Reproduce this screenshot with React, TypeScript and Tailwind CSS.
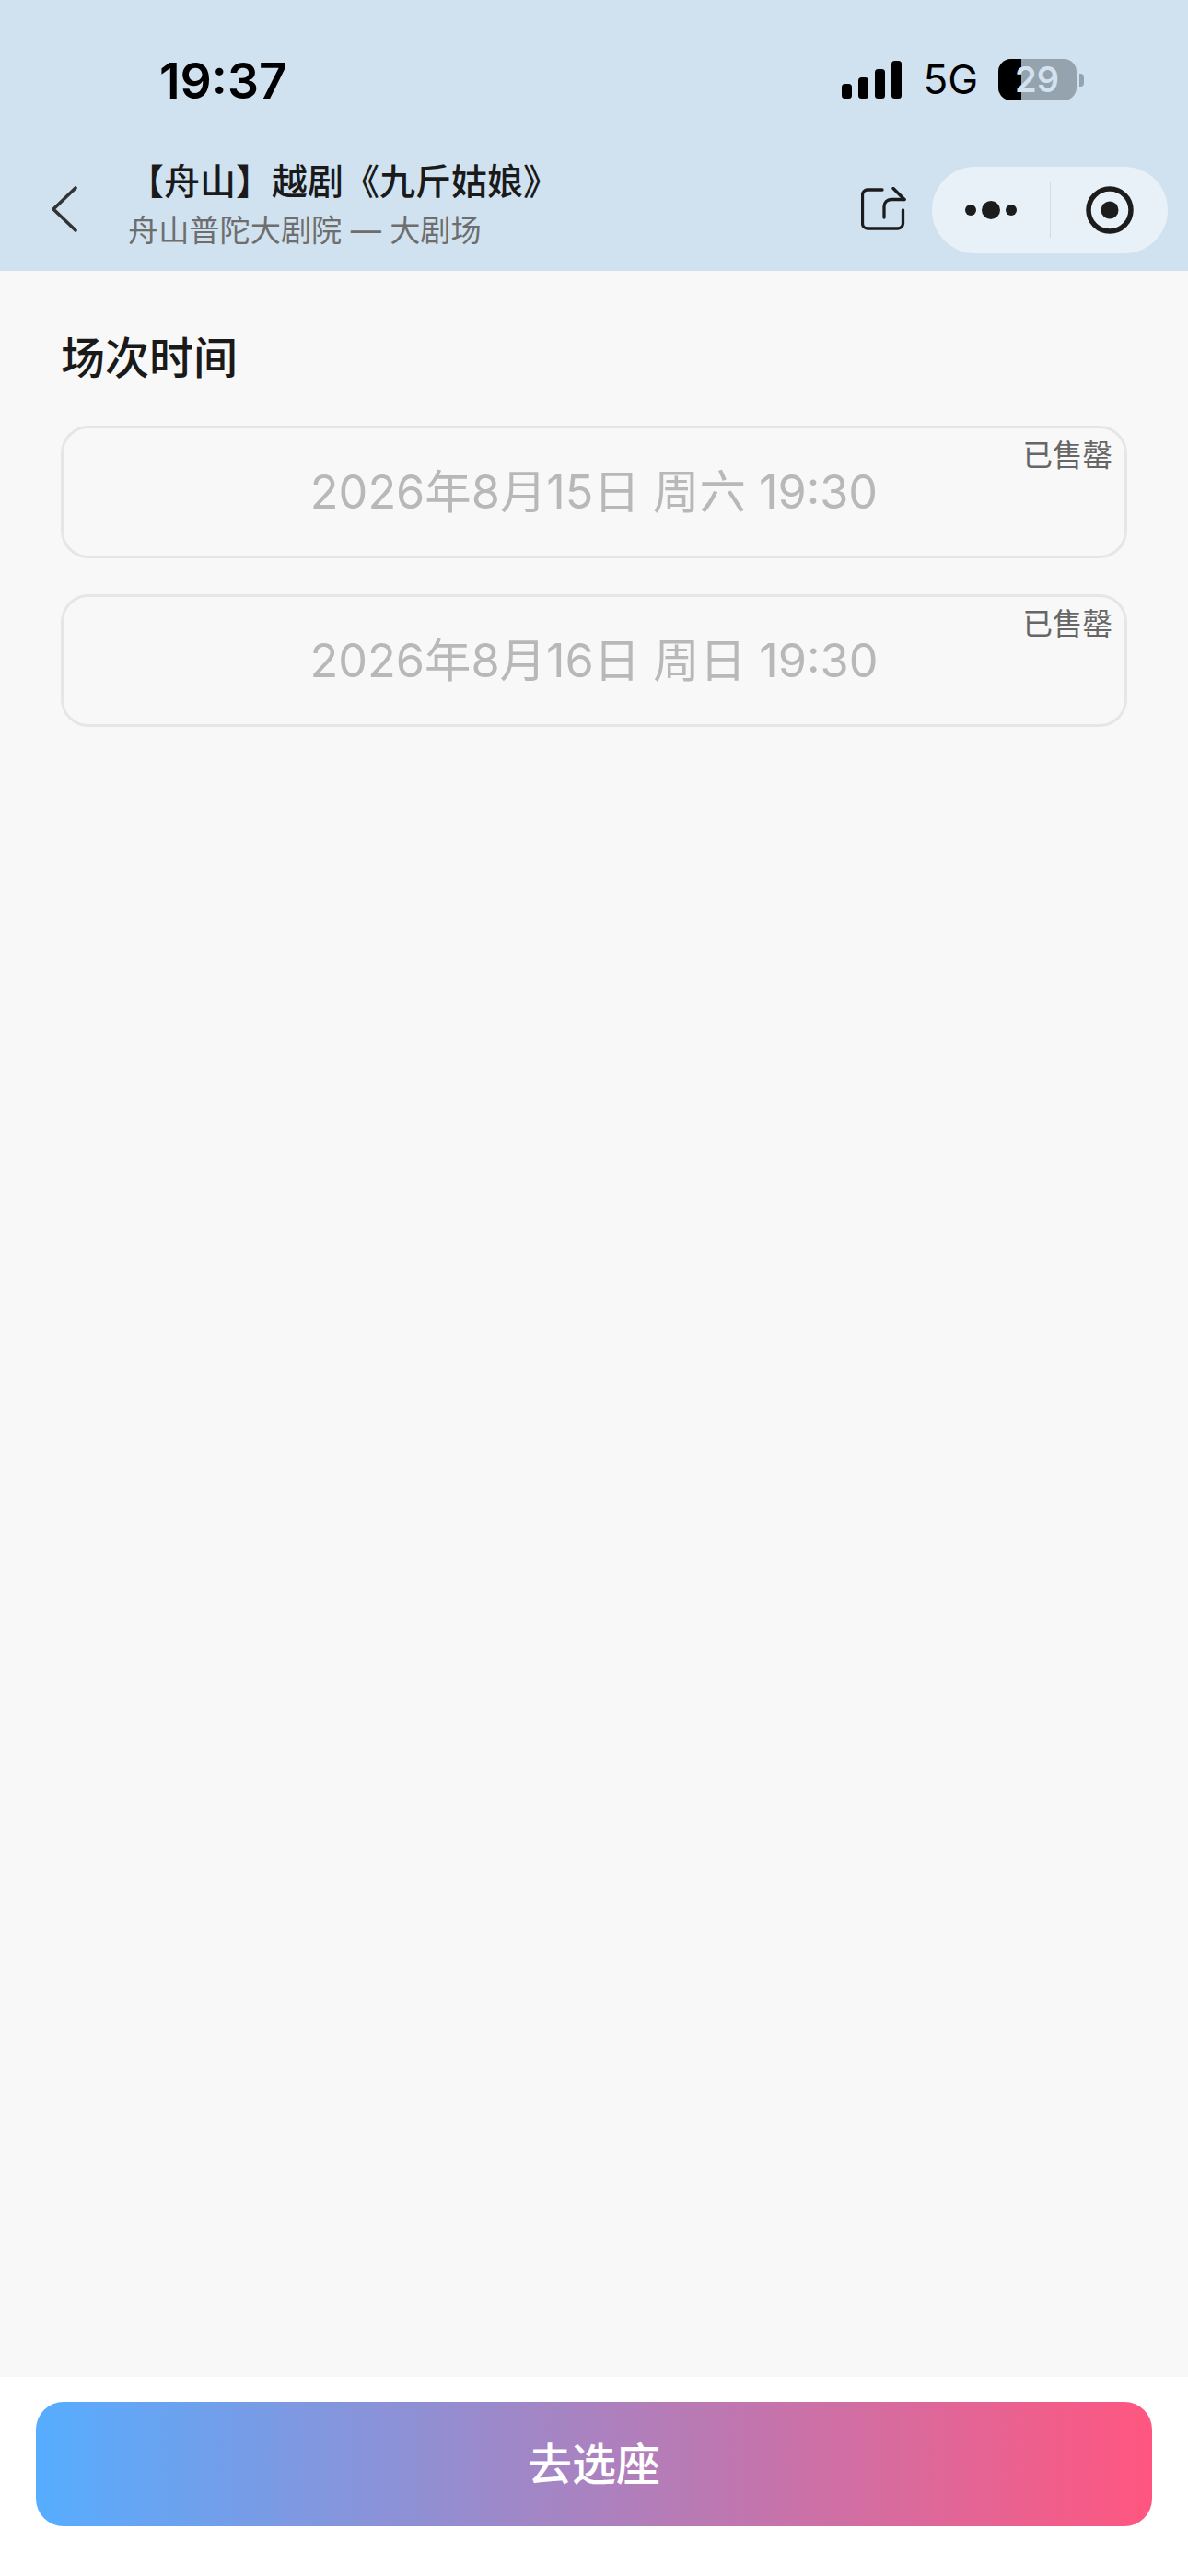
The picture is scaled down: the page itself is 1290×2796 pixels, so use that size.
const cjk = "font-['Inter','Noto_Sans_CJK_SC',sans-serif]";

function Signal() {
  return (
    <svg width="65" height="41" viewBox="0 0 65 41" className="block">
      <rect x="0" y="25" width="11" height="16" rx="3.5" fill="#000" />
      <rect x="18" y="18" width="11" height="23" rx="3.5" fill="#000" />
      <rect x="36" y="9" width="11" height="32" rx="3.5" fill="#000" />
      <rect x="54" y="0" width="11" height="41" rx="3.5" fill="#000" />
    </svg>
  );
}

function Battery() {
  return (
    <div className="relative ml-[22px] flex h-[45px] w-[93px] items-center">
      <div className="relative flex h-[45px] w-[85px] overflow-hidden rounded-[14px] bg-[#94a3ad]">
        <div className="h-full w-[25px] bg-black" />
      </div>
      <div className="ml-[3px] h-[14px] w-[5px] rounded-r-[4px] bg-[#94a3ad]" />
      <span className="absolute left-[18px] top-0 text-[38px] leading-[45px] font-semibold text-[#d3e2ee]">29</span>
    </div>
  );
}

function Share() {
  return (
    <svg width="50" height="50" viewBox="0 0 50 50" fill="none" stroke="#1c1c1c" strokeWidth="3.3" strokeLinecap="round" strokeLinejoin="round" className="block">
      <path d="M23 3H7a5.5 5.5 0 0 0-5.5 5.500V39.500A5.500 5.500 0 0 0 7 45H40a5.500 5.500 0 0 0 5.500-5.500V25" />
      <path d="M25 33V21a7.500 7.500 0 0 1 7.500-7.500H47" />
      <path d="M35 1.500L47 13.500" />
    </svg>
  );
}

function Session({ label }: { label: string }) {
  return (
    <div className="relative flex h-[144px] items-center justify-center rounded-[30px] border-[3px] border-[#e6e6e6]">
      <span className="text-[50.4px] leading-[60px] font-normal text-[#b8b8b8]">{label}</span>
      <span className="absolute right-[13px] top-[12px] text-[32.500px] leading-[36px] text-[#666]">已售罄</span>
    </div>
  );
}

export default function App() {
  return (
    <div className={`flex h-[2796px] w-[1290px] flex-col overflow-hidden bg-[#f8f8f8] ${cjk}`}>
      <header className="h-[294px] shrink-0 bg-[#d0e2f0]">
        <div className="flex h-[170px] items-start justify-between pl-[173px] pr-[113px] pt-[60px]">
          <span className="text-[53.500px] leading-[56px] font-semibold text-black">19:37</span>
          <div className="mt-[4px] flex items-center">
            <Signal />
            <span className="ml-[23px] text-[44px] leading-[45px] font-normal text-black">5G</span>
            <Battery />
          </div>
        </div>
        <div className="flex h-[124px] items-start pl-[56px] pr-[22px]">
          <svg width="28" height="50" viewBox="0 0 28 50" fill="none" stroke="#333" strokeWidth="3.6" strokeLinecap="round" strokeLinejoin="round" className="mt-[32px] shrink-0">
            <path d="M26 2L2 25l24 23" />
          </svg>
          <div className="ml-[55px] flex min-w-0 flex-col">
            <span className="mt-[2px] whitespace-nowrap text-[39px] leading-[50px] font-medium text-[#1a1a1a]">【舟山】越剧《九斤姑娘》</span>
            <span className="mt-[8px] whitespace-nowrap text-[33.200px] leading-[40px] text-[#6e6e6e]">舟山普陀大剧院 — 大剧场</span>
          </div>
          <div className="ml-auto mt-[33px]">
            <Share />
          </div>
          <div className="ml-[27px] mt-[11px] flex h-[94px] w-[256px] shrink-0 items-center rounded-[47px] bg-[#e9f1f8]">
            <div className="flex h-full w-[128px] items-center justify-center">
              <svg width="56" height="24" viewBox="0 0 56 24" fill="#1c1c1c">
                <circle cx="6" cy="12" r="6" />
                <circle cx="28" cy="12" r="10" />
                <circle cx="50" cy="12" r="6" />
              </svg>
            </div>
            <div className="h-[60px] w-px bg-[#d4dadf]" />
            <div className="flex h-full flex-1 items-center justify-center">
              <svg width="54" height="54" viewBox="0 0 54 54">
                <circle cx="27" cy="27" r="23" fill="none" stroke="#1c1c1c" strokeWidth="5.500" />
                <circle cx="27" cy="27" r="9.500" fill="#1c1c1c" />
              </svg>
            </div>
          </div>
        </div>
      </header>

      <main className="flex min-h-0 flex-1 flex-col px-[66px] pt-[63px]">
        <h2 className="text-[48px] leading-[64px] font-medium text-[#1a1a1a]">场次时间</h2>
        <div className="mt-[41px] flex flex-col gap-[39px]">
          <Session label="2026年8月15日 周六 19:30" />
          <Session label="2026年8月16日 周日 19:30" />
        </div>
      </main>

      <footer className="h-[216px] shrink-0 bg-white px-[39px] pt-[27px]">
        <button className="flex h-[135px] w-full items-center justify-center rounded-[30px] bg-linear-to-r/srgb from-[#56adff] to-[#ff5680] text-[48px] font-medium text-white">
          去选座
        </button>
      </footer>
    </div>
  );
}
